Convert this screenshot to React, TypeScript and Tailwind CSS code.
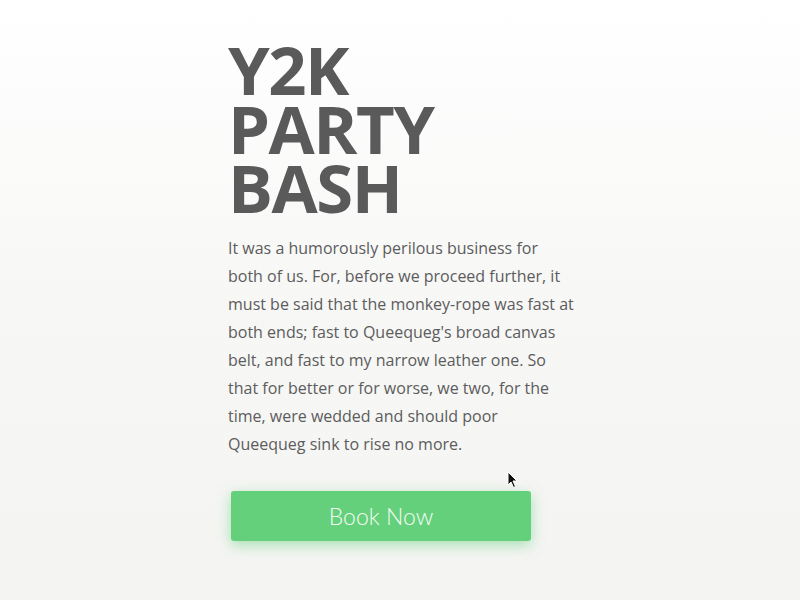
import React from "react";

export default function App() {
  return (
    <div className="relative w-[800px] h-[600px] overflow-hidden bg-gradient-to-b from-white via-[#f7f7f6] to-[#f4f4f2]">
      <div className="ml-[228px] pt-[40px] w-[346px] flex flex-col">
        <h1
          className="text-[67px] leading-[59px] font-bold text-[#5a5a5a] tracking-[-1.5px]"
          style={{ fontFamily: '"Open Sans", sans-serif' }}
        >
          Y2K
          <br />
          PARTY
          <br />
          BASH
        </h1>
        <p
          className="mt-[17px] text-[16px] leading-[28px] text-[#5c5c5c]"
          style={{ fontFamily: '"Open Sans", sans-serif' }}
        >
          It was a humorously perilous business for both of us. For, before we proceed further, it must be said that the monkey-rope was fast at both ends; fast to Queequeg's broad canvas belt, and fast to my narrow leather one. So that for better or for worse, we two, for the time, were wedded and should poor Queequeg sink to rise no more.
        </p>
        <button
          className="mt-[33px] ml-[3px] w-[300px] h-[50px] rounded-[3px] bg-[#64d07b] text-[#f5fcf6] text-[23px] leading-[50px] pb-[2px] font-light shadow-[0_4px_14px_rgba(100,208,123,0.55)]"
          style={{ fontFamily: 'Lato, "Noto Sans", sans-serif' }}
        >
          Book Now
        </button>
      </div>
      <svg
        className="absolute left-[507px] top-[471px]"
        width="12"
        height="18"
        viewBox="0 0 12 18"
      >
        <path d="M1 1 L1 14 L4 11 L6.5 16.5 L8.5 15.5 L6 10 L10 10 Z" fill="#111" stroke="#fff" strokeWidth="1" />
      </svg>
    </div>
  );
}
